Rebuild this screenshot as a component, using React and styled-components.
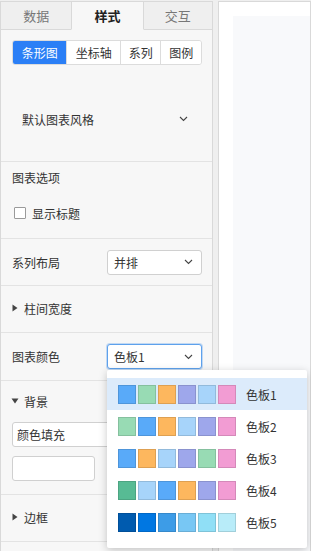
import React from "react";
import styled, { createGlobalStyle } from "styled-components";

const Global = createGlobalStyle`
  html, body { margin: 0; padding: 0; }
  body {
    font-family: "Noto Sans CJK SC", "Microsoft YaHei", sans-serif;
    font-size: 12px;
    color: #333;
    background: #efefef;
  }
  * { box-sizing: border-box; }
`;

const Page = styled.div`
  display: flex;
  height: 551px;
  padding-top: 1px;
  overflow: hidden;
`;

const Left = styled.div`
  width: 213px;
  flex: none;
  background: #f7f7f7;
  border: 1px solid #d9d9d9;
  border-bottom: none;
  display: flex;
  flex-direction: column;
`;

const Right = styled.div`
  flex: 1;
  margin-left: 5px;
  border: 1px solid #d9d9d9;
  border-bottom: none;
  background: #fff;
  padding: 14px 0 0 14px;
  display: flex;
`;

const Canvas = styled.div`
  flex: 1;
  background: #f8f9fb;
`;

const Tabs = styled.div`
  display: flex;
  height: 28px;
`;

const Tab = styled.div`
  flex: ${(p) => p.$w};
  display: flex;
  align-items: center;
  justify-content: center;
  font-size: 13px;
  background: ${(p) => (p.$active ? "#f7f7f7" : "#efefef")};
  color: ${(p) => (p.$active ? "#222" : "#777")};
  font-weight: ${(p) => (p.$active ? 700 : 400)};
  border-bottom: 1px solid ${(p) => (p.$active ? "transparent" : "#d9d9d9")};
  border-left: ${(p) => (p.$divL ? "1px solid #d9d9d9" : "none")};
  border-right: ${(p) => (p.$divR ? "1px solid #d9d9d9" : "none")};
`;

const Section = styled.div`
  height: ${(p) => p.$h}px;
  flex: none;
  border-bottom: 1px solid #e3e3e3;
  padding: ${(p) => p.$pad || "0 10px 0 11px"};
  display: flex;
  flex-direction: column;
  position: relative;
`;

const RowSection = styled(Section)`
  flex-direction: row;
  align-items: center;
  justify-content: space-between;
`;

const Segmented = styled.div`
  display: flex;
  height: 25px;
  margin-top: 10px;
  border: 1px solid #dcdcdc;
  border-radius: 3px;
  background: #fff;
  overflow: hidden;
`;

const Seg = styled.div`
  width: ${(p) => p.$w}px;
  display: flex;
  align-items: center;
  justify-content: center;
  font-size: 12px;
  background: ${(p) => (p.$active ? "#2b7ff6" : "#fff")};
  color: ${(p) => (p.$active ? "#fff" : "#333")};
  border-left: ${(p) => (p.$first ? "none" : "1px solid #dcdcdc")};
`;

const StyleRow = styled.div`
  margin-top: 34px;
  height: 40px;
  display: flex;
  align-items: center;
  justify-content: space-between;
  padding: 0 14px 0 10px;
  font-size: 12px;
`;

const Title = styled.div`
  height: 20px;
  line-height: 20px;
  font-size: 12px;
  margin-top: ${(p) => p.$mt || 0}px;
`;

const CheckRow = styled.label`
  display: flex;
  align-items: center;
  height: 20px;
  margin-top: 15px;
  padding-left: 2px;
  gap: 6px;
`;

const Box = styled.span`
  width: 12px;
  height: 12px;
  border: 1px solid #9a9a9a;
  background: #fff;
  border-radius: 1px;
`;

const SelectWrap = styled.div`
  position: relative;
  width: 95px;
`;

const Select = styled.div`
  height: 25px;
  border: 1px solid ${(p) => (p.$focus ? "#5ea1ec" : "#d0d0d0")};
  box-shadow: ${(p) => (p.$focus ? "0 0 0 1px rgba(94,161,236,0.35)" : "none")};
  border-radius: 3px;
  background: #fff;
  display: flex;
  align-items: center;
  justify-content: space-between;
  padding: 0 8px 0 6px;
  font-size: 12px;
`;

const Chevron = () => (
  <svg width="9" height="6" viewBox="0 0 9 6">
    <polyline points="1,1 4.5,4.5 8,1" fill="none" stroke="#444" strokeWidth="1.1" />
  </svg>
);

const Collapse = styled.div`
  display: flex;
  align-items: center;
  gap: 6px;
  height: 20px;
  font-size: 12px;
  margin-top: ${(p) => p.$mt || 0}px;
`;

const Tri = ({ open }) => (
  <svg width="6" height="8" viewBox="0 0 6 8" style={{ transform: open ? "rotate(90deg)" : "none" }}>
    <polygon points="0.5,0.5 5.5,4 0.5,7.5" fill="#444" />
  </svg>
);

const Input = styled.div`
  height: 25px;
  width: ${(p) => p.$w}px;
  margin-top: ${(p) => p.$mt}px;
  border: 1px solid #d0d0d0;
  border-radius: 3px;
  background: #fff;
  display: flex;
  align-items: center;
  padding-left: 4px;
  font-size: 12px;
`;

const Menu = styled.div`
  position: absolute;
  top: calc(100% + 1px);
  left: 0;
  width: 200px;
  background: #fff;
  padding: 8px 0 10px;
  box-shadow: 0 2px 8px rgba(0, 0, 0, 0.22);
  border-radius: 2px;
  z-index: 10;
`;

const Option = styled.div`
  height: 32px;
  display: flex;
  align-items: center;
  padding-left: 11px;
  background: ${(p) => (p.$active ? "#dcebfb" : "transparent")};
`;

const Swatches = styled.div`
  display: flex;
  gap: 2px;
  margin-right: 10px;
`;

const Swatch = styled.span`
  width: 18px;
  height: 19px;
  background: ${(p) => p.$c};
  box-shadow: inset 0 0 0 1px rgba(0, 0, 0, 0.12);
`;

const OptLabel = styled.span`
  font-size: 12px;
  color: #333;
`;

const C = {
  blue: "#59aaf9",
  green: "#98dbb4",
  orange: "#fdb75e",
  purple: "#9ea7eb",
  light: "#a7d4fa",
  pink: "#f29cd3",
  teal: "#57bb94",
};

const palettes = [
  [C.blue, C.green, C.orange, C.purple, C.light, C.pink],
  [C.green, C.blue, C.orange, C.light, C.purple, C.pink],
  [C.blue, C.orange, C.light, C.purple, C.green, C.pink],
  [C.teal, C.light, C.blue, C.orange, C.purple, C.pink],
  ["#005baf", "#0077e2", "#3d9ce7", "#78c7f4", "#90dff6", "#b8ecf9"],
];

export default function App() {
  return (
    <>
      <Global />
      <Page>
        <Left>
          <Tabs>
            <Tab $w="71">数据</Tab>
            <Tab $w="71" $active $divL $divR>样式</Tab>
            <Tab $w="69">交互</Tab>
          </Tabs>
          <Section $h={132}>
            <Segmented>
              <Seg $w={54} $active $first>条形图</Seg>
              <Seg $w={54}>坐标轴</Seg>
              <Seg $w={41}>系列</Seg>
              <Seg $w={41}>图例</Seg>
            </Segmented>
            <StyleRow>
              <span>默认图表风格</span>
              <Chevron />
            </StyleRow>
          </Section>
          <Section $h={77} $pad="6px 10px 0 11px">
            <Title>图表选项</Title>
            <CheckRow>
              <Box />
              <span>显示标题</span>
            </CheckRow>
          </Section>
          <RowSection $h={47}>
            <span>系列布局</span>
            <SelectWrap>
              <Select>
                <span>并排</span>
                <Chevron />
              </Select>
            </SelectWrap>
          </RowSection>
          <Section $h={47} $pad="0 10px 0 11px">
            <Collapse $mt={12}>
              <Tri />
              <span>柱间宽度</span>
            </Collapse>
          </Section>
          <RowSection $h={48}>
            <span>图表颜色</span>
            <SelectWrap>
              <Select $focus>
                <span>色板1</span>
                <Chevron />
              </Select>
              <Menu>
                {palettes.map((p, i) => (
                  <Option key={i} $active={i === 0}>
                    <Swatches>
                      {p.map((c, j) => (
                        <Swatch key={j} $c={c} />
                      ))}
                    </Swatches>
                    <OptLabel>色板{i + 1}</OptLabel>
                  </Option>
                ))}
              </Menu>
            </SelectWrap>
          </RowSection>
          <Section $h={114} $pad="10px 10px 0 11px">
            <Collapse>
              <Tri open />
              <span>背景</span>
            </Collapse>
            <Input $w={190} $mt={11}>颜色填充</Input>
            <Input $w={83} $mt={9} />
          </Section>
          <Section $h={47} $pad="0 10px 0 11px">
            <Collapse $mt={12}>
              <Tri />
              <span>边框</span>
            </Collapse>
          </Section>
        </Left>
        <Right>
          <Canvas />
        </Right>
      </Page>
    </>
  );
}
